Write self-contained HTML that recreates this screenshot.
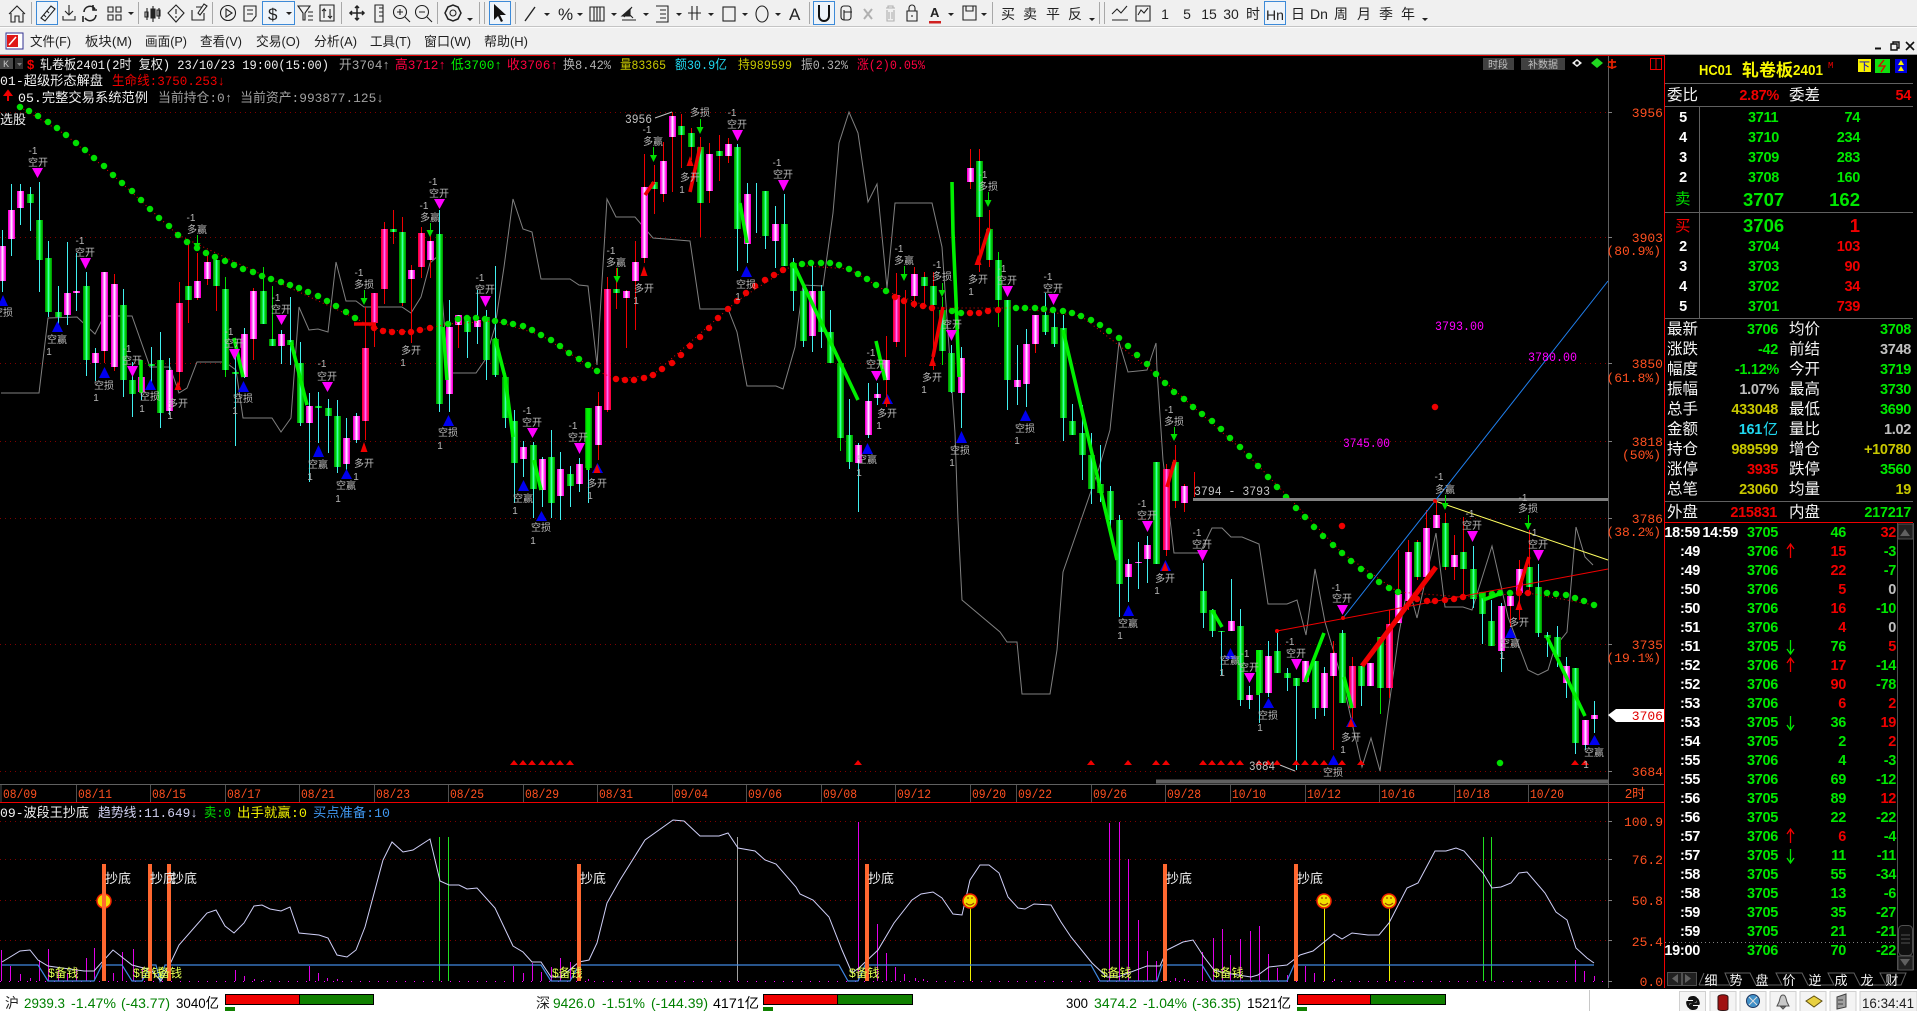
<!DOCTYPE html>
<html lang="zh"><head><meta charset="utf-8"><title>行情</title>
<style>
html,body{margin:0;padding:0;background:#000;overflow:hidden;width:1917px;height:1011px}
svg{display:block}
text{white-space:pre}
.m{font-family:"Liberation Mono","Noto Sans CJK SC",monospace;font-size:13px}
.s{font-family:"Liberation Sans","Noto Sans CJK SC",sans-serif}
.l{font-family:"Liberation Sans","Noto Sans CJK SC",sans-serif;font-size:10px;fill:#b8b8b8;text-anchor:middle}
.o{font-family:"Liberation Mono",monospace;font-size:13px;fill:#ff5020}
.n{font-family:"Liberation Sans",sans-serif;font-weight:bold;font-size:14.5px;letter-spacing:-.3px}
.b{font-family:"Liberation Sans",sans-serif;font-weight:bold;font-size:18.5px}
.c{font-family:"Liberation Sans","Noto Sans CJK SC",sans-serif;font-size:15.5px;fill:#f4f4f4}
.t{font-family:"Liberation Sans","Noto Sans CJK SC",sans-serif;font-size:13px;fill:#202020}
.st{font-family:"Liberation Sans","Noto Sans CJK SC",sans-serif;font-size:14px}
</style></head><body>
<svg xmlns="http://www.w3.org/2000/svg" width="1917" height="1011" viewBox="0 0 1917 1011">
<defs>
<path id="G" d="M30 194V203M39 220V260M48 258V312M58 312V317M86 286V360M123 305V380M132 380V394M151 364V366M160 360V413M188 286V300M216 260V286M225 289V370M235 372V374M263 291V324M272 339V346M290 340V345M300 363V423M318 406V408M328 408V416M337 416V467M393 229V232M402 232V303M439 234V404M467 317V332M486 317V360M495 339V375M505 377V418M514 421V463M533 445V489M551 457V503M570 474V486M588 408V468M616 289V293M654 182V189M681 126V135M691 133V147M700 147V203M719 151V156M737 147V229M765 191V236M784 224V266M793 263V291M803 291V341M821 291V332M830 332V363M840 363V438M849 435V462M924 277V286M933 286V305M942 310V351M951 353V392M979 161V217M989 229V260M998 260V300M1007 300V380M1045 315V332M1054 327V344M1063 328V418M1072 421V435M1082 433V455M1091 455V489M1100 484V493M1110 491V520M1119 520V584M1156 462V564M1175 462V501M1203 591V613M1212 610V631M1221 631V632M1240 626V700M1259 650V693M1277 651V673M1287 673V678M1296 678V686M1315 661V708M1342 633V703M1361 666V686M1380 637V688M1417 542V577M1445 523V567M1463 552V569M1473 569V599M1482 592V614M1491 621V646M1529 567V587M1538 587V633M1547 635V638M1557 637V657M1575 668V743"/>
<path id="P" d="M2 246V281M11 210V239M20 191V208M67 293V315M76 291V293M95 353V363M104 272V351M114 284V367M141 377V392M169 370V411M197 281V298M207 262V279M244 334V377M253 291V339M281 334V346M309 406V423M346 438V464M356 416V440M411 270V279M430 241V260M449 327V394M458 315V325M477 320V327M523 447V459M542 459V490M560 469V496M579 464V484M598 406V445M626 291V298M635 262V281M644 187V258M663 161V194M672 116V137M709 154V191M728 144V156M747 194V244M775 224V241M812 291V336M858 445V463M868 401V435M877 394V398M886 360V380M914 274V296M961 358V393M970 168V182M1017 380V387M1026 344V384M1035 315V344M1128 564V577M1138 562V563M1147 545V559M1184 486V503M1231 621V631M1249 695V700M1268 656V693M1305 661V682M1324 673V708M1333 653V676M1370 663V686M1398 594V623M1408 552V601M1426 528V577M1436 515V528M1454 555V567M1501 606V651M1510 596V606M1519 569V593M1566 666V683M1585 720V745M1594 715V719"/>
<path id="R" d="M179 303V372M365 348V421M374 293V323M384 229V289M421 233V267M607 289V410M896 295V342M1166 469V550M1352 666V708M1389 624V688"/>
</defs>
<rect width="1917" height="1011" fill="#000"/>
<!-- toolbar -->
<rect width="1917" height="26" fill="#f0f0f0"/>
<rect y="26" width="1917" height="1" fill="#c4c4c4"/>
<rect y="27" width="1917" height="1" fill="#fcfcfc"/>
<rect y="28" width="1917" height="26" fill="#f0f0f0"/>
<rect y="54" width="1917" height="1" fill="#a0a0a0"/>
<g fill="#eef4fa" stroke="#3c8ad8" stroke-width="1">
<rect x="36.5" y="1.5" width="21" height="23"/><rect x="262.5" y="1.5" width="32" height="23"/><rect x="489.5" y="1.5" width="21" height="23"/><rect x="813.5" y="1.5" width="21" height="23"/><rect x="1264.5" y="1.5" width="21" height="23"/>
</g>
<g stroke="#a8a8a8" stroke-width="1"><path d="M31.5 2V24M138.5 2V24M212.5 2V24M341.5 2V24M437.5 2V24M479.5 2V24M484.5 2V24M515.5 2V24M809.5 2V24M992.5 2V24M1099.5 2V24M1104.5 2V24"/></g>
<g fill="none" stroke="#222" stroke-width="1.1">
<path d="M9 14L17 6L25 14M11 13V22H15V16H19V22H23V13"/>
<path d="M41 18L51 6L55 9L45 21ZM44 15L46 17M47 11L49 13"/>
<path d="M69 5V15M65 11L69 15L73 11M63 16V20H75V16"/>
<path d="M84 12A6 6 0 0 1 95 9M96 15A6 6 0 0 1 85 18M93 5V10H97M83 22V16" stroke-width="1.6"/>
<path d="M108 7h5v5h-5zM116 7h5v5h-5zM108 15h5v5h-5zM116 15h5v5h-5z"/>
<path d="M147 8V20M153 6V22M159 8V19"/><path d="M151 9h4v9h-4z" fill="#222"/><path d="M145 12h3v5h-3zM157 10h3v6h-3z"/>
<path d="M176 5L184 13L176 22L168 13ZM176 9V14M176 16V18"/>
<path d="M196 7h6M192 10V20H204V13M200 15L207 6L204 4L198 13Z"/>
<circle cx="228" cy="13" r="7.5"/><path d="M226 9L232 13L226 17Z"/>
<path d="M244 6H256V16L252 21H244ZM247 10H253M247 14H253"/>
<path d="M298 6H310L305 13V20H303V13ZM308 12H313M308 16H313M308 20H313"/>
<path d="M320 5H334V21H320ZM324 18V9L322 11M324 9L326 11M330 9V18L328 16M330 18L332 16"/>
<path d="M357 6V20M350 13H364M355 8L357 6L359 8M355 18L357 20L359 18M352 11L350 13L352 15M362 11L364 13L362 15" stroke-width="1.5"/>
<path d="M375 5H383V22H375ZM379 8H383M379 12H383M379 16H383"/>
<circle cx="400" cy="12" r="6.5"/><path d="M405 17L410 22M397 12H403M400 9V15"/>
<circle cx="422" cy="12" r="6.5"/><path d="M427 17L432 22M419 12H425"/>
<circle cx="453" cy="13" r="3"/><path d="M448 7L453 5L458 7L461 13L458 19L453 21L448 19L445 13Z" stroke-width="1.5"/>
<path d="M525 21L535 7" stroke-width="1.4"/>
<path d="M590 7H604V21H590ZM594 7V21M597 7V21M600 7V21"/>
<path d="M622 20H636M624 17L632 7M627 12L633 18"/><path d="M622 16L630 9V16Z" fill="#222"/>
<path d="M656 6H668V22H656M660 10H666M660 14H666M660 18H666"/>
<path d="M688 13H701M692 6V20M697 6V20"/>
<rect x="723" y="7" width="12" height="14"/>
<ellipse cx="762" cy="14" rx="6" ry="8"/>
<rect x="841" y="6" width="10" height="14" rx="3"/><path d="M844 20V10M844 12H852"/>
<path d="M864 9L872 19M872 9L864 19" stroke="#b0b0b0" stroke-width="2"/>
<path d="M886 8H895M888 8V6H893V8M887 10V21H894V10M889 12V19M892 12V19" stroke="#b0b0b0"/>
<path d="M907 11H917V21H907ZM909 11V8A3 3 0 0 1 915 8V11M912 15V17"/>
<path d="M963 6H976V20H963ZM966 6V11H973V6"/>
<path d="M1112 20H1128M1112 14L1117 9L1121 13L1127 6"/>
<path d="M1136 6H1150V21H1136ZM1138 15L1141 10L1144 13L1148 8"/>
</g>
<path d="M494 4V20L498 16L501 22L503 21L500 15H506Z" fill="#111"/>
<g class="s" fill="#222" font-size="17"><text x="268" y="20" font-family="Liberation Sans">$</text><text x="558" y="20" font-family="Liberation Sans">%</text><text x="789" y="20" font-family="Liberation Sans">A</text>
<text x="930" y="17" font-family="Liberation Sans" font-size="13" font-weight="bold" fill="#222">A</text></g>
<rect x="929" y="21" width="12" height="2.5" fill="#d02020"/>
<path d="M818 5H820V16A4 4 0 0 0 828 16V5H830V16A6 6 0 0 1 818 16Z" fill="#111"/>
<g fill="#222">
<path d="M128 12h6l-3 3zM286 12h6l-3 3zM544 13h6l-3 3zM577 13h6l-3 3zM611 13h6l-3 3zM643 13h6l-3 3zM676 13h6l-3 3zM708 13h6l-3 3zM742 13h6l-3 3zM775 13h6l-3 3zM948 13h6l-3 3zM981 13h6l-3 3zM467 18h6l-3 3zM1089 18h6l-3 3zM1422 18h6l-3 3z"/>
</g>
<g class="s" font-size="14" fill="#222" text-anchor="middle">
<text x="1008" y="19">买</text><text x="1030" y="19">卖</text><text x="1053" y="19">平</text><text x="1075" y="19">反</text>
<text x="1165" y="19">1</text><text x="1187" y="19">5</text><text x="1209" y="19">15</text><text x="1231" y="19">30</text><text x="1253" y="19">时</text><text x="1275" y="20">Hn</text><text x="1298" y="19">日</text><text x="1319" y="19">Dn</text><text x="1341" y="19">周</text><text x="1364" y="19">月</text><text x="1386" y="19">季</text><text x="1408" y="19">年</text>
</g>
<!-- menu -->
<rect x="6" y="33" width="17" height="16" fill="#fff" stroke="#303090"/><rect x="7" y="35" width="11" height="12" fill="#e01818"/><path d="M9 45L16 37" stroke="#fff" stroke-width="1.5"/>
<g class="t">
<text x="30" y="46" textLength="41" lengthAdjust="spacingAndGlyphs">文件(F)</text>
<text x="85" y="46" textLength="47" lengthAdjust="spacingAndGlyphs">板块(M)</text>
<text x="145" y="46" textLength="42" lengthAdjust="spacingAndGlyphs">画面(P)</text>
<text x="200" y="46" textLength="42" lengthAdjust="spacingAndGlyphs">查看(V)</text>
<text x="256" y="46" textLength="44" lengthAdjust="spacingAndGlyphs">交易(O)</text>
<text x="314" y="46" textLength="43" lengthAdjust="spacingAndGlyphs">分析(A)</text>
<text x="370" y="46" textLength="41" lengthAdjust="spacingAndGlyphs">工具(T)</text>
<text x="424" y="46" textLength="47" lengthAdjust="spacingAndGlyphs">窗口(W)</text>
<text x="484" y="46" textLength="44" lengthAdjust="spacingAndGlyphs">帮助(H)</text>
</g>
<path d="M1875 47.5h6v2h-6z" fill="#111"/>
<path d="M1893 44V42H1899V48H1897M1891 44H1897V50H1891Z" fill="none" stroke="#111" stroke-width="1.4"/>
<path d="M1906 42L1914 50M1914 42L1906 50" stroke="#111" stroke-width="1.6"/>
<!-- chart frame -->
<rect y="55" width="1664" height="1" fill="#e00000"/>
<g fill="none" stroke="#800000" stroke-width="1" stroke-dasharray="1 4">
<path d="M0 112.5H1608M0 237.5H1608M0 363.5H1608M0 441.5H1608M0 518.5H1608M0 644.5H1608M0 771.5H1608M0 821.5H1608M0 859.5H1608M0 900.5H1608M0 940.5H1608"/>
</g>
<path d="M1608.5 56V988" stroke="#606060"/>
<path d="M1608 112.5h4M1608 237.5h4M1608 363.5h4M1608 441.5h4M1608 518.5h4M1608 644.5h4M1608 771.5h4M1608 821.5h4M1608 859.5h4M1608 900.5h4M1608 940.5h4M1608 981.5h4" stroke="#808080"/>
<path d="M1664.5 55V988" stroke="#f00000"/>
<!-- gray line -->
<polyline fill="none" stroke="#808080" points="1,393 39,393 48,318 77,317 95,334 104,316 132,316 150,367 170,367 179,393 187,388 197,362 225,362 236,370 243,418 272,418 281,432 291,418 299,307 309,330 318,329 328,332 336,262 346,301 356,301 364,307 402,307 411,313 421,297 430,263 439,255 448,373 476,373 485,360 495,327 504,267 513,199 523,229 532,232 541,279 570,279 579,285 588,286 597,365 602,282 607,199 616,217 635,217 653,238 690,241 700,309 728,309 737,332 747,386 776,386 783,389 795,347 803,285 823,286 833,213 839,143 849,112 858,133 868,202 877,184 887,288 895,203 932,203 942,247 955,433 958,520 962,600 1000,632 1007,642 1017,642 1022,694 1050,694 1057,650 1063,572 1080,523 1099,468 1110,430 1119,342 1128,372 1147,370 1156,343 1157,370 1163,460 1174,553 1200,553 1212,528 1222,528 1231,537 1242,537 1259,544 1268,604 1287,604 1297,600 1306,635 1315,569 1325,622 1343,683 1362,767 1371,738 1380,771 1399,633 1408,585 1417,618 1436,533 1445,607 1463,607 1472,610 1492,546 1508,617 1528,670 1538,675 1548,670 1555,647 1567,632 1576,527 1585,557 1593,565"/>
<!-- candles -->
<g transform="translate(.5 0)" fill="none">
<path stroke="#40f0f0" d="M2 230V292M11 184V256M20 184V225M30 187V231M39 182V292M48 241V317M58 286V327M67 242V325M76 253V311M86 272V376M95 348V381M123 289V397M132 362V417M141 360V400M151 347V390M160 332V428M169 358V415M235 340V446M244 328V378M281 330V364M290 297V365M300 342V426M309 393V482M318 392V443M328 399V453M337 400V473M346 418V470M356 413V443M439 210V412M449 300V412M467 317V358M477 290V344M486 310V380M495 266V377M505 373V428M514 410V503M523 441V477M533 442V518M542 457V507M551 430V518M560 452V520M570 466V507M579 458V492M588 408V503M737 144V271M747 183V263M756 183V233M765 191V249M775 206V268M784 194V266M793 258V311M803 285V347M812 265V352M821 285V348M830 310V363M849 399V469M858 443V512M868 383V438M877 383V405M951 345V393M961 347V428M1007 300V410M1017 345V405M1026 329V407M1045 293V335M1054 312V347M1063 315V441M1072 404V435M1082 405V480M1091 433V504M1100 445V502M1110 486V527M1119 515V617M1128 559V602M1138 542V589M1147 536V583M1156 522V564M1203 563V628M1212 609V637M1221 632V675M1231 579V631M1240 609V706M1249 686V709M1259 650V723M1268 641V697M1277 630V673M1287 668V691M1296 678V770M1305 661V682M1315 661V719M1324 667V716M1342 630V703M1361 686V706M1473 546V608M1482 614V644M1491 600V646M1501 603V672M1538 564V637M1547 632V657M1557 626V667M1566 657V698M1575 668V754M1585 745V750M1594 701V733"/>
<path stroke="#f00000" d="M104 272V363M114 274V371M179 282V385M188 240V323M197 253V300M207 252V285M216 258V311M253 288V360M365 307V440M374 293V347M384 222V304M393 210V244M402 217V306M411 265V343M421 227V278M430 223V278M458 315V348M598 392V460M607 277V412M616 268V309M626 290V348M635 241V330M644 154V263M654 165V214M663 142V202M672 112V192M681 114V168M691 128V160M700 137V237M709 143V203M719 135V181M728 138V163M886 336V407M896 273V347M905 290V357M914 267V308M924 272V307M933 272V370M970 149V189M979 149V272M989 210V267M1035 315V353M1166 464V556M1175 445V508M1184 484V512M1194 472V497M1333 641V750M1352 657V720M1370 663V686M1389 610V698M1398 550V623M1408 540V610M1417 540V580M1426 510V577M1436 502V528M1445 513V570M1454 535V580M1463 517V595M1510 606V627M1519 560V620M1529 530V590"/>
<path stroke="#00e000" d="M225 277V377M263 267V324M272 286V346M840 362V451M942 297V365M998 252V327M1380 688V714"/>
<use href="#G" stroke="#00a000" stroke-width="7"/><use href="#G" stroke="#00e818" stroke-width="4"/><use href="#G" stroke="#40ffb0" stroke-width="1.5"/>
<use href="#P" stroke="#ff00d8" stroke-width="7"/><use href="#P" stroke="#ff70ff" stroke-width="4"/><use href="#P" stroke="#ffe0ff" stroke-width="1.5"/>
<use href="#R" stroke="#ff0040" stroke-width="7"/><use href="#R" stroke="#ff10a0" stroke-width="4"/><use href="#R" stroke="#ff70f0" stroke-width="1.5"/>
</g>
<!-- dots -->
<polyline fill="none" stroke="#f00000" stroke-dasharray="1 3" points="20,107 66,135 113,175 178,235 271,279 355,318 374,328 411,332 448,324 495,321 541,335 597,371 616,379 653,375 737,301 793,265 849,269 886,291 932,308 1016,308 1081,316 1156,374 1249,456 1342,553 1398,592 1463,597 1528,593 1594,605"/>
<path fill="none" stroke-linecap="round" stroke-width="6.5" stroke="#00e000" d="M20 107h0M29 111h0M38 116h0M48 122h0M57 128h0M66 135h0M76 143h0M85 150h0M94 158h0M104 166h0M113 175h0M122 183h0M132 191h0M141 200h0M150 209h0M159 218h0M169 226h0M178 235h0M187 242h0M197 248h0M206 253h0M215 257h0M225 261h0M234 265h0M243 269h0M253 272h0M262 276h0M271 279h0M281 282h0M290 285h0M299 288h0M308 292h0M318 296h0M327 301h0M336 306h0M346 312h0M355 318h0M448 324h0M458 319h0M467 318h0M476 318h0M485 319h0M495 321h0M504 322h0M513 324h0M523 326h0M532 330h0M541 335h0M551 340h0M560 346h0M569 353h0M579 359h0M588 365h0M597 371h0M793 265h0M802 264h0M811 263h0M821 263h0M830 263h0M839 265h0M849 269h0M858 274h0M867 279h0M876 285h0M886 291h0M952 311h0M961 313h0M1016 308h0M1025 308h0M1035 308h0M1044 309h0M1053 310h0M1063 311h0M1072 313h0M1081 316h0M1091 320h0M1100 325h0M1109 331h0M1119 338h0M1128 346h0M1137 355h0M1147 364h0M1156 374h0M1165 383h0M1174 392h0M1184 399h0M1193 407h0M1202 414h0M1212 421h0M1221 429h0M1230 438h0M1240 447h0M1249 456h0M1258 466h0M1268 477h0M1277 487h0M1286 497h0M1296 508h0M1305 517h0M1314 527h0M1323 536h0M1333 545h0M1342 553h0M1351 561h0M1361 569h0M1370 576h0M1379 582h0M1389 588h0M1398 592h0M1482 595h0M1492 594h0M1500 593h0M1510 593h0M1547 593h0M1556 594h0M1566 595h0M1575 598h0M1584 601h0M1594 605h0M1500 763h0"/>
<path fill="none" stroke-linecap="round" stroke-width="6.5" stroke="#f00000" d="M374 328h0M383 331h0M392 332h0M402 332h0M411 332h0M420 330h0M430 328h0M616 379h0M625 380h0M634 380h0M644 378h0M653 375h0M662 369h0M672 363h0M681 355h0M690 346h0M700 337h0M709 328h0M718 318h0M728 309h0M737 301h0M746 293h0M755 286h0M765 280h0M774 275h0M783 270h0M895 297h0M904 301h0M914 304h0M923 306h0M932 308h0M970 313h0M979 313h0M988 311h0M998 310h0M1342 526h0M1435 407h0M1417 599h0M1427 601h0M1435 601h0M1445 600h0M1454 599h0M1463 597h0M1519 593h0M1528 593h0"/>
<!-- thin trend lines -->
<path d="M1193 499.5H1608" stroke="#808080" stroke-width="3"/>
<path d="M1156 781.5H1608" stroke="#606060" stroke-width="4"/>
<path d="M1277 631L1608 569" stroke="#f00000" fill="none"/>
<path d="M1343 618L1608 281" stroke="#2080f0" fill="none"/>
<path d="M1435 501L1608 560" stroke="#ffff60" fill="none"/>
<path d="M1280 765L1295 771M655 118L672 112" stroke="#c0c0c0" fill="none"/>
<path d="M1277 631h0M1343 618h0M1435 501h0" stroke="#f00000" stroke-width="4" stroke-linecap="round"/>
<!-- thick trend -->
<g fill="none" stroke="#00f000" stroke-width="3.6">
<path d="M141 360V393M234 338L243 377M291 342L307 405M443 327L447 380M495 338L505 377L513 437M534 460L541 490M588 408V470M793 263L858 400M740 203L747 243M876 341L885 380M952 182L953 233L956 300L959 377M1063 330L1117 560M1212 610L1222 627M1305 682L1324 633M1344 677L1352 708M1483 600L1502 593M1547 637L1585 716M1258 650V695"/>
</g>
<g fill="none" stroke="#f00000" stroke-width="3.6">
<path d="M354 324H376M645 195L654 182M690 192L700 147M933 357L943 307M978 263L989 228M1167 487L1175 460M1518 592L1529 557"/>
<path d="M1362 666L1436 567" stroke-width="5"/>
</g>
<!-- markers -->
<path fill="#ff00ff" d="M32 168h11l-5.500 10zM80 258h11l-5.500 11zM127 366h11l-5.500 11zM229 349h11l-5.500 11zM276 315h11l-5.500 10zM322 382h11l-5.500 10zM434 199h11l-5.500 10zM480 296h11l-5.500 11zM527 428h11l-5.500 10zM574 443h11l-5.500 11zM732 130h11l-5.500 11zM778 180h11l-5.500 11zM871 371h11l-5.500 10zM946 330h11l-5.500 11zM1002 286h11l-5.500 11zM1048 294h11l-5.500 11zM1142 521h11l-5.500 11zM1197 550h11l-5.500 11zM1244 673h11l-5.500 10zM1291 659h11l-5.500 11zM1337 605h11l-5.500 10zM1467 531h11l-5.500 11zM1533 550h11l-5.500 11z"/>
<path fill="#0000f0" d="M-2 306h10l-5-11zM52 332h11l-5.500 -11zM99 378h11l-5.500 -11zM145 390h11l-5.500 -11zM238 392h11l-5.500 -11zM313 457h11l-5.500 -12zM341 479h11l-5.500 -10zM443 426h11l-5.500 -11zM518 491h11l-5.500 -11zM536 521h11l-5.500 -10zM592 473h11l-5.500 -10zM741 277h11l-5.500 -11zM862 454h11l-5.500 -11zM882 404h11l-5.500 -10zM956 443h11l-5.500 -12zM1020 421h11l-5.500 -11zM1123 616h11l-5.500 -11zM1160 571h11l-5.500 -11zM1225 659h11l-5.500 -11zM1263 708h11l-5.500 -10zM1328 765h11l-5.500 -10zM1346 727h11l-5.500 -10zM1505 638h11l-5.500 -11zM1589 745h11l-5.500 -10z"/>
<path fill="#f00000" d="M174.500 390h7l-3.500 -9zM593.500 473h7l-3.500 -9zM640.500 276h7l-3.500 -10zM686.500 166h7l-3.500 -10zM360.500 452h7l-3.500 -10zM883.500 404h7l-3.500 -9zM929 366h7l-3.500 -10zM974.500 265h7l-3.500 -10zM1161.500 571h7l-3.500 -9zM1347.500 727h7l-3.500 -9zM1515.500 610h7l-3.500 -10z"/>
<path fill="#00e000" d="M193.500 243h7l-3.500 7zM613.500 276h7l-3.500 7zM650 155h7l-3.500 7zM696.500 127h7l-3.500 7zM360.500 298h7l-3.500 7zM426.500 230h7l-3.500 7zM900.500 274h7l-3.500 7zM938.500 290h7l-3.500 7zM984.500 200h7l-3.500 7zM1170.500 434h7l-3.500 7zM1441.500 503h7l-3.500 7zM1524.500 523h7l-3.500 7z"/>
<path stroke="#00e000" fill="none" d="M197.500 235V245M617.500 268V278M653.500 147V157M700.500 119V129M364.500 290V300M430.500 223V232M904.500 266V276M942.500 283V292M988.500 192V202M1174.500 427V436M1445.500 495V505M1528.500 515V525"/>
<path fill="#f00000" d="M510 765l4-5 4 5zM519 765l4-5 4 5zM528 765l4-5 4 5zM538 765l4-5 4 5zM547 765l4-5 4 5zM556 765l4-5 4 5zM566 765l4-5 4 5zM854 765l4-5 4 5zM1087 765l4-5 4 5zM1124 765l4-5 4 5zM1152 765l4-5 4 5zM1162 765l4-5 4 5zM1199 765l4-5 4 5zM1208 765l4-5 4 5zM1217 765l4-5 4 5zM1227 765l4-5 4 5zM1236 765l4-5 4 5zM1255 765l4-5 4 5zM1264 765l4-5 4 5zM1273 765l4-5 4 5zM1292 765l4-5 4 5zM1301 765l4-5 4 5zM1311 765l4-5 4 5zM1320 765l4-5 4 5zM1338 765l4-5 4 5zM1357 765l4-5 4 5zM1571 765l4-5 4 5zM1581 765l4-5 4 5z"/>
<g class="l">
<text x="33" y="154">-1</text><text x="38" y="166">空开</text><text x="80" y="244">-1</text><text x="85" y="256">空开</text><text x="3" y="316">空损</text><text x="57" y="343">空赢</text><text x="49" y="355">1</text><text x="104" y="389">空损</text><text x="96" y="401">1</text><text x="127" y="352">-1</text><text x="132" y="364">空开</text><text x="150" y="400">空损</text><text x="142" y="412">1</text><text x="178" y="407">多开</text><text x="170" y="419">1</text><text x="191" y="221">-1</text><text x="197" y="233">多赢</text><text x="243" y="402">空损</text><text x="235" y="414">1</text><text x="229" y="335">-1</text><text x="234" y="347">空开</text><text x="276" y="301">-1</text><text x="281" y="313">空开</text><text x="359" y="276">-1</text><text x="364" y="288">多损</text><text x="433" y="185">-1</text><text x="439" y="197">空开</text><text x="424" y="209">-1</text><text x="430" y="221">多赢</text><text x="411" y="354">多开</text><text x="403" y="366">1</text><text x="448" y="436">空损</text><text x="440" y="449">1</text><text x="480" y="281">-1</text><text x="485" y="293">空开</text><text x="322" y="367">-1</text><text x="327" y="380">空开</text><text x="318" y="468">空赢</text><text x="310" y="480">1</text><text x="346" y="489">空赢</text><text x="338" y="502">1</text><text x="364" y="467">多开</text><text x="356" y="480">1</text><text x="527" y="414">-1</text><text x="532" y="426">空开</text><text x="523" y="502">空赢</text><text x="515" y="514">1</text><text x="541" y="531">空损</text><text x="533" y="544">1</text><text x="573" y="429">-1</text><text x="578" y="441">空开</text><text x="597" y="487">多开</text><text x="590" y="499">1</text><text x="611" y="254">-1</text><text x="616" y="266">多赢</text><text x="644" y="292">多开</text><text x="636" y="304">1</text><text x="647" y="133">-1</text><text x="653" y="145">多赢</text><text x="690" y="181">多开</text><text x="682" y="193">1</text><text x="700" y="116">多损</text><text x="732" y="116">-1</text><text x="737" y="128">空开</text><text x="746" y="288">空损</text><text x="738" y="300">1</text><text x="777" y="166">-1</text><text x="783" y="178">空开</text><text x="871" y="356">-1</text><text x="876" y="368">空开</text><text x="867" y="463">空赢</text><text x="859" y="476">1</text><text x="887" y="417">多开</text><text x="879" y="429">1</text><text x="899" y="252">-1</text><text x="904" y="264">多赢</text><text x="937" y="268">-1</text><text x="942" y="280">多损</text><text x="932" y="381">多开</text><text x="924" y="393">1</text><text x="952" y="328">空开</text><text x="960" y="454">空损</text><text x="952" y="466">1</text><text x="983" y="178">-1</text><text x="988" y="190">多损</text><text x="978" y="283">多开</text><text x="971" y="295">1</text><text x="1002" y="272">-1</text><text x="1007" y="284">空开</text><text x="1048" y="280">-1</text><text x="1053" y="292">空开</text><text x="1025" y="432">空损</text><text x="1017" y="444">1</text><text x="1128" y="627">空赢</text><text x="1120" y="639">1</text><text x="1142" y="507">-1</text><text x="1147" y="519">空开</text><text x="1169" y="413">-1</text><text x="1174" y="425">多损</text><text x="1165" y="582">多开</text><text x="1157" y="594">1</text><text x="1197" y="536">-1</text><text x="1202" y="548">空开</text><text x="1230" y="664">空赢</text><text x="1222" y="676">1</text><text x="1245" y="657">-1</text><text x="1249" y="671">空开</text><text x="1268" y="719">空损</text><text x="1260" y="731">1</text><text x="1290" y="645">-1</text><text x="1296" y="657">空开</text><text x="1336" y="591">-1</text><text x="1342" y="602">空开</text><text x="1333" y="776">空损</text><text x="1351" y="741">多开</text><text x="1343" y="753">1</text><text x="1439" y="480">-1</text><text x="1445" y="493">多赢</text><text x="1470" y="517">-1</text><text x="1472" y="529">空开</text><text x="1523" y="501">-1</text><text x="1528" y="512">多损</text><text x="1533" y="536">-1</text><text x="1538" y="548">空开</text><text x="1510" y="647">空赢</text><text x="1502" y="659">1</text><text x="1519" y="626">多开</text><text x="1594" y="756">空赢</text><text x="1586" y="768">1</text>
</g>
<g class="m" font-size="12">
<text x="625" y="123" fill="#c0c0c0" textLength="27" lengthAdjust="spacingAndGlyphs">3956</text>
<text x="1249" y="770" fill="#c0c0c0" textLength="26" lengthAdjust="spacingAndGlyphs">3684</text>
<text x="1194" y="495" fill="#c0c0c0" textLength="76" lengthAdjust="spacingAndGlyphs">3794 - 3793</text>
<text x="1343" y="447" fill="#ff00ff" textLength="47" lengthAdjust="spacingAndGlyphs">3745.00</text>
<text x="1435" y="330" fill="#ff00ff" textLength="49" lengthAdjust="spacingAndGlyphs">3793.00</text>
<text x="1528" y="361" fill="#ff00ff" textLength="49" lengthAdjust="spacingAndGlyphs">3780.00</text>
</g>
<!-- header text -->
<rect x="0" y="58" width="13" height="11" fill="#484848"/><rect x="15" y="58" width="8" height="11" fill="#303030"/>
<text x="3" y="67" font-family="Liberation Mono" font-size="10" fill="#c0c0c0">K</text><path d="M17 63h5l-2.500 3z" fill="#808080"/>
<g class="m">
<text x="27" y="69" fill="#f00000" font-weight="bold" font-family="Liberation Sans">$</text>
<text x="40" y="69" fill="#f0f0f0" textLength="289" lengthAdjust="spacingAndGlyphs">轧卷板2401(2时 复权) 23/10/23 19:00(15:00)</text>
<text x="339" y="69" fill="#a8a8a8" textLength="51" lengthAdjust="spacingAndGlyphs">开3704↑</text>
<text x="395" y="69" fill="#ff0040" textLength="51" lengthAdjust="spacingAndGlyphs">高3712↑</text>
<text x="451" y="69" fill="#00f000" textLength="51" lengthAdjust="spacingAndGlyphs">低3700↑</text>
<text x="507" y="69" fill="#ff0040" textLength="51" lengthAdjust="spacingAndGlyphs">收3706↑</text>
<text x="563" y="69" fill="#b0b0b0" textLength="48" lengthAdjust="spacingAndGlyphs">换8.42%</text>
<text x="620" y="69" fill="#c8c800" textLength="46" lengthAdjust="spacingAndGlyphs">量83365</text>
<text x="675" y="69" fill="#20d8f0" textLength="52" lengthAdjust="spacingAndGlyphs">额30.9亿</text>
<text x="738" y="69" fill="#c8c800" textLength="54" lengthAdjust="spacingAndGlyphs">持989599</text>
<text x="801" y="69" fill="#b0b0b0" textLength="47" lengthAdjust="spacingAndGlyphs">振0.32%</text>
<text x="857" y="69" fill="#ff0040" textLength="68" lengthAdjust="spacingAndGlyphs">涨(2)0.05%</text>
<text x="0" y="85" fill="#f0f0f0" textLength="103" lengthAdjust="spacingAndGlyphs">01-超级形态解盘</text>
<text x="112" y="85" fill="#f00000" textLength="113" lengthAdjust="spacingAndGlyphs">生命线:3750.253↓</text>
<text x="18" y="102" fill="#f0f0f0" textLength="130" lengthAdjust="spacingAndGlyphs">05.完整交易系统范例</text>
<text x="158" y="102" fill="#a0a0a0" textLength="226" lengthAdjust="spacingAndGlyphs">当前持仓:0↑ 当前资产:993877.125↓</text>
<text x="0" y="124" fill="#f0f0f0" font-size="13">选股</text>
<text x="0" y="817" fill="#f0f0f0" textLength="89" lengthAdjust="spacingAndGlyphs">09-波段王抄底</text>
<text x="98" y="817" fill="#d0d0f0" textLength="100" lengthAdjust="spacingAndGlyphs">趋势线:11.649↓</text>
<text x="204" y="817" fill="#00e000" textLength="27" lengthAdjust="spacingAndGlyphs">卖:0</text>
<text x="237" y="817" fill="#f0f000" textLength="70" lengthAdjust="spacingAndGlyphs">出手就赢:0</text>
<text x="313" y="817" fill="#4098f0" textLength="77" lengthAdjust="spacingAndGlyphs">买点准备:10</text>
</g>
<path d="M8 101V92M5 95L8 91L11 95Z" stroke="#f00000" stroke-width="2" fill="#f00000"/>
<rect x="1483" y="58" width="31" height="12" fill="#404040"/><rect x="1521" y="58" width="44" height="12" fill="#404040"/>
<g class="s" font-size="10" fill="#c0c0c0" text-anchor="middle"><text x="1498" y="68">时段</text><text x="1543" y="68">补数据</text></g>
<path d="M1577 59l5 4-5 4-5-4z" fill="#f0f0f0"/><circle cx="1577" cy="63" r="1.800" fill="#000"/>
<path d="M1597 58l6 5-6 5-6-5z" fill="#20d820"/>
<path d="M1612 59V69M1608 62H1616M1608 66C1609 68 1615 68 1616 66" stroke="#e02000" stroke-width="1.800" fill="none"/>
<rect x="1650.500" y="58.500" width="11" height="11" fill="none" stroke="#f00000"/><path d="M1656 58V70" stroke="#f00000"/>
<!-- price axis -->
<g class="o" text-anchor="end">
<text x="1663" y="117">3956</text><text x="1663" y="242">3903</text><text x="1661" y="255">(80.9%)</text><text x="1663" y="368">3850</text><text x="1661" y="382">(61.8%)</text><text x="1663" y="446">3818</text><text x="1661" y="459">(50%)</text><text x="1663" y="523">3786</text><text x="1661" y="536">(38.2%)</text><text x="1663" y="649">3735</text><text x="1661" y="662">(19.1%)</text><text x="1663" y="776">3684</text>
<text x="1663" y="826">100.9</text><text x="1663" y="864">76.2</text><text x="1663" y="905">50.8</text><text x="1663" y="946">25.4</text><text x="1663" y="986">0.0</text>
</g>
<polygon points="1608,715 1616,709 1664,709 1664,722 1616,722" fill="#fff"/>
<text x="1663" y="720" class="o" style="fill:#e00000" text-anchor="end">3706</text>
<!-- date axis -->
<path d="M0 784.500H1664" stroke="#606060"/>
<path d="M1 785V802M76.500 785V802M150.500 785V802M225.500 785V802M299.500 785V802M374.500 785V802M448.500 785V802M523.500 785V802M597.500 785V802M672.500 785V802M746.500 785V802M821.500 785V802M895.500 785V802M970.500 785V802M1016.500 785V802M1091.500 785V802M1165.500 785V802M1230.500 785V802M1305.500 785V802M1379.500 785V802M1454.500 785V802M1528.500 785V802M1608.500 785V802" stroke="#505050"/>
<path d="M0 802.500H1664" stroke="#f00000"/>
<g class="o">
<text x="3" y="798" textLength="34" lengthAdjust="spacingAndGlyphs">08/09</text><text x="78" y="798" textLength="34" lengthAdjust="spacingAndGlyphs">08/11</text><text x="152" y="798" textLength="34" lengthAdjust="spacingAndGlyphs">08/15</text><text x="227" y="798" textLength="34" lengthAdjust="spacingAndGlyphs">08/17</text><text x="301" y="798" textLength="34" lengthAdjust="spacingAndGlyphs">08/21</text><text x="376" y="798" textLength="34" lengthAdjust="spacingAndGlyphs">08/23</text><text x="450" y="798" textLength="34" lengthAdjust="spacingAndGlyphs">08/25</text><text x="525" y="798" textLength="34" lengthAdjust="spacingAndGlyphs">08/29</text><text x="599" y="798" textLength="34" lengthAdjust="spacingAndGlyphs">08/31</text><text x="674" y="798" textLength="34" lengthAdjust="spacingAndGlyphs">09/04</text><text x="748" y="798" textLength="34" lengthAdjust="spacingAndGlyphs">09/06</text><text x="823" y="798" textLength="34" lengthAdjust="spacingAndGlyphs">09/08</text><text x="897" y="798" textLength="34" lengthAdjust="spacingAndGlyphs">09/12</text><text x="972" y="798" textLength="34" lengthAdjust="spacingAndGlyphs">09/20</text><text x="1018" y="798" textLength="34" lengthAdjust="spacingAndGlyphs">09/22</text><text x="1093" y="798" textLength="34" lengthAdjust="spacingAndGlyphs">09/26</text><text x="1167" y="798" textLength="34" lengthAdjust="spacingAndGlyphs">09/28</text><text x="1232" y="798" textLength="34" lengthAdjust="spacingAndGlyphs">10/10</text><text x="1307" y="798" textLength="34" lengthAdjust="spacingAndGlyphs">10/12</text><text x="1381" y="798" textLength="34" lengthAdjust="spacingAndGlyphs">10/16</text><text x="1456" y="798" textLength="34" lengthAdjust="spacingAndGlyphs">10/18</text><text x="1530" y="798" textLength="34" lengthAdjust="spacingAndGlyphs">10/20</text>
<text x="1625" y="798" font-family="Liberation Sans,Noto Sans CJK SC" textLength="20" lengthAdjust="spacingAndGlyphs">2时</text>
</g>
<!-- indicator -->
<path d="M0 981.500H1608" stroke="#ff00ff" stroke-dasharray="1 8"/>
<path stroke="#e000e8" fill="none" d="M1.500 981V950M10.500 981V966M20.500 981V974M30.500 981V978M39.500 981V960M48.500 981V949M58.500 981V970M67.500 981V973M76.500 981V968M86.500 981V958M94.500 981V948M113.500 981V973M122.500 981V952M133.500 981V949M142.500 981V967M235.500 981V970M244.500 981V976M254.500 981V979M263.500 981V980M309.500 981V966M318.500 981V973M327.500 981V978M337.500 981V979M513.500 981V966M523.500 981V973M532.500 981V963M541.500 981V972M551.500 981V967M560.500 981V958M570.500 981V962M588.500 981V979M858.500 981V822M877.500 981V924M886.500 981V953M895.500 981V967M904.500 981V974M915.500 981V978M923.500 981V979M1109.500 981V823M1119.500 981V822M1128.500 981V859M1138.500 981V920M1147.500 981V951M1156.500 981V961M1175.500 981V978M1184.500 981V979M1202.500 981V952M1213.500 981V938M1222.500 981V929M1230.500 981V955M1240.500 981V939M1250.500 981V931M1259.500 981V926M1268.500 981V954M1277.500 981V968M1287.500 981V975M1305.500 981V966M1314.500 981V973M1324.500 981V978M1334.500 981V979M1575.500 981V960M1584.500 981V971M1594.500 981V976"/>
<path stroke="#20e020" fill="none" d="M439.500 837V981M448.500 837V981M1483.500 837V981M1491.500 837V981"/>
<path stroke="#a0a0a0" fill="none" d="M737.500 837V981"/>
<path stroke="#f0f000" fill="none" d="M970.500 908V981M1324.500 908V981M1389.500 908V981"/>
<polyline fill="none" stroke="#4088e0" stroke-width="1.200" points="2,965 38,965 48,981 94,981 102,965 122,965 132,981 142,981 151,965 156,965 160,981 165,965 541,965 551,981 570,981 579,965 839,965 848,981 858,981 865,965 1091,965 1100,981 1157,981 1162,965 1202,965 1212,981 1287,981 1294,965 1594,965"/>
<polyline fill="none" stroke="#d0d0f8" points="2,962 20,951 30,950 38,960 48,966 84,971 94,971 113,950 132,965 151,970 161,981 171,962 179,945 207,913 216,910 225,926 234,933 244,923 254,906 262,905 270,909 281,911 290,907 299,933 319,935 328,938 337,955 347,957 356,950 365,927 383,860 392,842 403,852 413,850 430,839 440,881 449,885 459,885 467,889 477,888 495,908 513,946 523,952 532,962 541,962 551,977 561,977 579,962 589,960 597,943 607,903 620,880 645,840 673,820 684,821 700,836 719,836 728,833 738,848 755,851 765,860 776,864 796,887 800,894 813,900 829,917 842,950 852,973 860,967 878,950 894,923 912,900 921,894 933,892 942,898 953,914 962,915 970,880 980,865 989,865 999,873 1008,897 1018,908 1025,909 1034,904 1051,905 1061,922 1071,937 1092,963 1107,977 1118,977 1131,972 1147,966 1160,966 1167,950 1183,942 1193,940 1204,957 1214,970 1225,973 1251,977 1258,975 1269,967 1287,965 1300,955 1313,951 1334,934 1342,939 1352,933 1368,935 1379,935 1389,923 1407,888 1418,883 1435,851 1446,851 1456,848 1464,851 1483,873 1492,888 1501,887 1511,883 1519,873 1527,872 1545,893 1556,912 1567,920 1576,948 1587,958 1594,963"/>
<g fill="#f0e000" stroke="#f02000" stroke-width="1.500"><circle cx="104" cy="901" r="7"/><circle cx="970" cy="901" r="7"/><circle cx="1324" cy="901" r="7"/><circle cx="1389" cy="901" r="7"/></g>
<g fill="none" stroke="#a04000" stroke-width="1.200"><path d="M966 903Q970 907 974 903M1320 903Q1324 907 1328 903M1385 903Q1389 907 1393 903M968 897v2M972 897v2M1322 897v2M1326 897v2M1387 897v2M1391 897v2"/></g>
<path fill="#ff6830" d="M102 864h4v117h-4zM148 864h4v117h-4zM167 864h4v117h-4zM577 864h4v117h-4zM865 864h4v117h-4zM1163 864h4v117h-4zM1294 864h4v117h-4z"/>
<g class="s" font-size="13" fill="#f0f0f0">
<text x="105" y="883">抄底</text><text x="150" y="883">抄底</text><text x="171" y="883">抄底</text><text x="580" y="883">抄底</text><text x="868" y="883">抄底</text><text x="1166" y="883">抄底</text><text x="1297" y="883">抄底</text>
</g>
<g class="s" font-size="12" fill="#e0ff50">
<text x="48" y="977">$备钱</text><text x="133" y="977">$备钱</text><text x="158" y="977">备钱</text><text x="552" y="977">$备钱</text><text x="849" y="977">$备钱</text><text x="1101" y="977">$备钱</text><text x="1213" y="977">$备钱</text>
</g>
<!-- right panel -->
<path d="M1665 83.500H1913M1665 106.500H1913M1665 212.500H1913M1665 318.500H1913M1665 501.500H1913M1699.500 107V318" stroke="#606060"/>
<path d="M1665 522.500H1913" stroke="#f00000"/>
<g class="s" font-weight="bold" fill="#f8f800">
<text x="1699" y="75" font-size="14.500" font-family="Liberation Sans" textLength="33" lengthAdjust="spacingAndGlyphs">HC01</text>
<text x="1742" y="76" font-size="17">轧卷板</text>
<text x="1793" y="75" font-size="14.500" font-family="Liberation Sans" textLength="30" lengthAdjust="spacingAndGlyphs">2401</text>
</g>
<text x="1828" y="68" font-family="Liberation Mono" font-size="9" fill="#f00000">M</text>
<rect x="1858" y="59" width="13" height="13" fill="#f8f000"/><text x="1864.500" y="70" font-family="Noto Sans CJK SC" font-size="11" fill="#0000d0" text-anchor="middle">下</text>
<rect x="1875" y="59" width="15" height="14" fill="#10e010"/><path d="M1884 60L1879 66H1885L1881 72" stroke="#e00000" stroke-width="1.300" fill="none"/>
<rect x="1895" y="59" width="12" height="14" fill="#0000e0"/><path d="M1901 60l3 5h-6zM1901 66l3 5h-6z" fill="#f8f000"/>
<g class="c">
<text x="1667" y="100">委比</text><text x="1789" y="100">委差</text>
<text x="1667" y="334">最新</text><text x="1789" y="334">均价</text>
<text x="1667" y="354">涨跌</text><text x="1789" y="354">前结</text>
<text x="1667" y="374">幅度</text><text x="1789" y="374">今开</text>
<text x="1667" y="394">振幅</text><text x="1789" y="394">最高</text>
<text x="1667" y="414">总手</text><text x="1789" y="414">最低</text>
<text x="1667" y="434">金额</text><text x="1789" y="434">量比</text>
<text x="1667" y="454">持仓</text><text x="1789" y="454">增仓</text>
<text x="1667" y="474">涨停</text><text x="1789" y="474">跌停</text>
<text x="1667" y="494">总笔</text><text x="1789" y="494">均量</text>
<text x="1667" y="517">外盘</text><text x="1789" y="517">内盘</text>
<text x="1675" y="204" style="fill:#00e000">卖</text>
<text x="1675" y="231" style="fill:#f00000">买</text>
</g>
<g class="n" fill="#fff" text-anchor="middle">
<text x="1683" y="122">5</text><text x="1683" y="142">4</text><text x="1683" y="162">3</text><text x="1683" y="182">2</text><text x="1683" y="251">2</text><text x="1683" y="271">3</text><text x="1683" y="291">4</text><text x="1683" y="311">5</text>
</g>
<g class="n" fill="#00e800">
<text x="1748" y="122">3711</text><text x="1748" y="142">3710</text><text x="1748" y="162">3709</text><text x="1748" y="182">3708</text><text x="1748" y="251">3704</text><text x="1748" y="271">3703</text><text x="1748" y="291">3702</text><text x="1748" y="311">3701</text>
</g>
<g class="b" fill="#00e800"><text x="1743" y="206">3707</text><text x="1743" y="232">3706</text></g>
<g class="n" text-anchor="end">
<g fill="#00e800"><text x="1860" y="122">74</text><text x="1860" y="142">234</text><text x="1860" y="162">283</text><text x="1860" y="182">160</text></g>
<g fill="#f00000"><text x="1860" y="251">103</text><text x="1860" y="271">90</text><text x="1860" y="291">34</text><text x="1860" y="311">739</text>
<text x="1779" y="100">2.87%</text><text x="1911" y="100">54</text></g>
</g>
<text x="1860" y="206" class="b" fill="#00e800" text-anchor="end">162</text>
<text x="1860" y="232" class="b" fill="#f00000" text-anchor="end">1</text>
<g class="n" text-anchor="end">
<g fill="#00e800"><text x="1778" y="334">3706</text><text x="1778" y="354">-42</text><text x="1779" y="374">-1.12%</text>
<text x="1911" y="334">3708</text><text x="1911" y="374">3719</text><text x="1911" y="394">3730</text><text x="1911" y="414">3690</text><text x="1911" y="474">3560</text><text x="1911" y="517">217217</text></g>
<g fill="#c0c0c0"><text x="1779" y="394">1.07%</text><text x="1911" y="354">3748</text><text x="1911" y="434">1.02</text></g>
<g fill="#c8c800"><text x="1778" y="414">433048</text><text x="1778" y="454">989599</text><text x="1778" y="494">23060</text><text x="1911" y="454">+10780</text><text x="1911" y="494">19</text></g>
<g fill="#f00000"><text x="1778" y="474">3935</text><text x="1777" y="517">215831</text></g>
<text x="1762" y="434" fill="#20d8f0">161</text>
</g>
<text x="1763" y="434" class="s" font-size="15" fill="#20d8f0">亿</text>
<!-- ticks -->
<g class="n" fill="#fff" text-anchor="end">
<text x="1700" y="537">18:59</text><text x="1738" y="537">14:59</text>
<text x="1700" y="556">:49</text><text x="1700" y="575">:49</text><text x="1700" y="594">:50</text><text x="1700" y="613">:50</text><text x="1700" y="632">:51</text><text x="1700" y="651">:51</text><text x="1700" y="670">:52</text><text x="1700" y="689">:52</text><text x="1700" y="708">:53</text><text x="1700" y="727">:53</text><text x="1700" y="746">:54</text><text x="1700" y="765">:55</text><text x="1700" y="784">:55</text><text x="1700" y="803">:56</text><text x="1700" y="822">:56</text><text x="1700" y="841">:57</text><text x="1700" y="860">:57</text><text x="1700" y="879">:58</text><text x="1700" y="898">:58</text><text x="1700" y="917">:59</text><text x="1700" y="936">:59</text><text x="1700" y="955">19:00</text>
</g>
<g class="n" fill="#00e800">
<text x="1747" y="537">3705</text><text x="1747" y="556">3706</text><text x="1747" y="575">3706</text><text x="1747" y="594">3706</text><text x="1747" y="613">3706</text><text x="1747" y="632">3706</text><text x="1747" y="651">3705</text><text x="1747" y="670">3706</text><text x="1747" y="689">3706</text><text x="1747" y="708">3706</text><text x="1747" y="727">3705</text><text x="1747" y="746">3705</text><text x="1747" y="765">3706</text><text x="1747" y="784">3706</text><text x="1747" y="803">3705</text><text x="1747" y="822">3705</text><text x="1747" y="841">3706</text><text x="1747" y="860">3705</text><text x="1747" y="879">3705</text><text x="1747" y="898">3705</text><text x="1747" y="917">3705</text><text x="1747" y="936">3705</text><text x="1747" y="955">3706</text>
</g>
<g class="n" text-anchor="end">
<text x="1846" y="537" fill="#00e800">46</text><text x="1846" y="556" fill="#f00000">15</text><text x="1846" y="575" fill="#f00000">22</text><text x="1846" y="594" fill="#f00000">5</text><text x="1846" y="613" fill="#f00000">16</text><text x="1846" y="632" fill="#f00000">4</text><text x="1846" y="651" fill="#00e800">76</text><text x="1846" y="670" fill="#f00000">17</text><text x="1846" y="689" fill="#f00000">90</text><text x="1846" y="708" fill="#f00000">6</text><text x="1846" y="727" fill="#00e800">36</text><text x="1846" y="746" fill="#00e800">2</text><text x="1846" y="765" fill="#00e800">4</text><text x="1846" y="784" fill="#00e800">69</text><text x="1846" y="803" fill="#00e800">89</text><text x="1846" y="822" fill="#00e800">22</text><text x="1846" y="841" fill="#f00000">6</text><text x="1846" y="860" fill="#00e800">11</text><text x="1846" y="879" fill="#00e800">55</text><text x="1846" y="898" fill="#00e800">13</text><text x="1846" y="917" fill="#00e800">35</text><text x="1846" y="936" fill="#00e800">21</text><text x="1846" y="955" fill="#00e800">70</text>
<text x="1896" y="537" fill="#f00000">32</text><text x="1896" y="556" fill="#00e800">-3</text><text x="1896" y="575" fill="#00e800">-7</text><text x="1896" y="594" fill="#c0c0c0">0</text><text x="1896" y="613" fill="#00e800">-10</text><text x="1896" y="632" fill="#c0c0c0">0</text><text x="1896" y="651" fill="#f00000">5</text><text x="1896" y="670" fill="#00e800">-14</text><text x="1896" y="689" fill="#00e800">-78</text><text x="1896" y="708" fill="#f00000">2</text><text x="1896" y="727" fill="#f00000">19</text><text x="1896" y="746" fill="#f00000">2</text><text x="1896" y="765" fill="#00e800">-3</text><text x="1896" y="784" fill="#00e800">-12</text><text x="1896" y="803" fill="#f00000">12</text><text x="1896" y="822" fill="#00e800">-22</text><text x="1896" y="841" fill="#00e800">-4</text><text x="1896" y="860" fill="#00e800">-11</text><text x="1896" y="879" fill="#00e800">-34</text><text x="1896" y="898" fill="#00e800">-6</text><text x="1896" y="917" fill="#00e800">-27</text><text x="1896" y="936" fill="#00e800">-21</text><text x="1896" y="955" fill="#00e800">-22</text>
</g>
<path fill="none" stroke="#f00000" stroke-width="1.300" d="M1790.500 558V545M1787 549L1790.500 544L1794 549M1790.500 672V659M1787 663L1790.500 658L1794 663M1790.500 843V830M1787 834L1790.500 829L1794 834"/>
<path fill="none" stroke="#00e800" stroke-width="1.300" d="M1790.500 640V653M1787 649L1790.500 654L1794 649M1790.500 716V729M1787 725L1790.500 730L1794 725M1790.500 849V862M1787 858L1790.500 863L1794 858"/>
<path d="M1665 942.500H1896" stroke="#808080" stroke-dasharray="1 3"/>
<path d="M1897.500 523V970" stroke="#505050"/><path d="M1913.500 523V970" stroke="#505050"/>
<rect x="1898" y="524" width="15" height="15" fill="#202020" stroke="#505050"/><path d="M1900 536h10l-5-7z" fill="#606060"/>
<rect x="1898.500" y="925.500" width="14" height="30" rx="4" fill="#101010" stroke="#505050"/><path d="M1901 935h9M1901 939h9M1901 943h9" stroke="#505050"/>
<rect x="1898" y="956" width="15" height="14" fill="#202020" stroke="#505050"/><path d="M1900 959h10l-5 7z" fill="#606060"/>
<rect x="1667.500" y="972.500" width="14" height="13" fill="#202020" stroke="#505050"/><rect x="1682.500" y="972.500" width="14" height="13" fill="#202020" stroke="#505050"/>
<path d="M1678 974v9l-6-4.500zM1685 974v9l6-4.500z" fill="#606060"/>
<path fill="none" stroke="#606060" d="M1699 985L1704 973M1725 973L1730 985H1699M1730 985L1725 973H1750L1756 985M1750 973L1756 985H1782L1776 973H1802L1808 985M1802 973L1808 985H1834L1828 973H1854L1860 985M1854 973L1860 985H1886L1880 973H1906L1901 985H1860"/>
<g class="s" font-size="13" fill="#f4f4f4" text-anchor="middle">
<text x="1711" y="985">细</text><text x="1736" y="985">势</text><text x="1762" y="985">盘</text><text x="1789" y="985">价</text><text x="1815" y="985">逆</text><text x="1841" y="985">成</text><text x="1867" y="985">龙</text><text x="1892" y="985">财</text>
</g>
<!-- status bar -->
<rect y="989" width="1917" height="22" fill="#fff"/>
<g class="st">
<text x="5" y="1008" fill="#202020">沪</text><text x="24" y="1008" fill="#008000" textLength="41" lengthAdjust="spacingAndGlyphs">2939.3</text><text x="71" y="1008" fill="#008000" textLength="45" lengthAdjust="spacingAndGlyphs">-1.47%</text><text x="121" y="1008" fill="#008000" textLength="49" lengthAdjust="spacingAndGlyphs">(-43.77)</text><text x="176" y="1008" fill="#000" textLength="43" lengthAdjust="spacingAndGlyphs">3040亿</text>
<text x="536" y="1008" fill="#202020">深</text><text x="553" y="1008" fill="#008000" textLength="42" lengthAdjust="spacingAndGlyphs">9426.0</text><text x="602" y="1008" fill="#008000" textLength="43" lengthAdjust="spacingAndGlyphs">-1.51%</text><text x="651" y="1008" fill="#008000" textLength="57" lengthAdjust="spacingAndGlyphs">(-144.39)</text><text x="713" y="1008" fill="#000" textLength="46" lengthAdjust="spacingAndGlyphs">4171亿</text>
<text x="1066" y="1008" fill="#000" textLength="22" lengthAdjust="spacingAndGlyphs">300</text><text x="1094" y="1008" fill="#008000" textLength="43" lengthAdjust="spacingAndGlyphs">3474.2</text><text x="1143" y="1008" fill="#008000" textLength="44" lengthAdjust="spacingAndGlyphs">-1.04%</text><text x="1192" y="1008" fill="#008000" textLength="49" lengthAdjust="spacingAndGlyphs">(-36.35)</text><text x="1247" y="1008" fill="#000" textLength="44" lengthAdjust="spacingAndGlyphs">1521亿</text>
</g>
<g stroke="#000" stroke-width="1">
<rect x="225.500" y="994.500" width="148" height="10" fill="#108000"/><rect x="225.500" y="994.500" width="74" height="10" fill="#f00000"/>
<rect x="763.500" y="994.500" width="149" height="10" fill="#108000"/><rect x="763.500" y="994.500" width="74" height="10" fill="#f00000"/>
<rect x="1297.500" y="994.500" width="148" height="10" fill="#108000"/><rect x="1297.500" y="994.500" width="73" height="10" fill="#f00000"/>
</g>
<path fill="#108000" d="M225 1007h10v4h-10zM763 1007h10v4h-10zM1297 1007h10v4h-10z"/>
<path d="M1589.500 990V1011" stroke="#c8c8c8"/>
<g fill="#f4f4f4" stroke="#d0d0d0"><rect x="1679.500" y="991.500" width="26" height="22"/><rect x="1710" y="991.500" width="26" height="22"/><rect x="1740" y="991.500" width="26" height="22"/><rect x="1770" y="991.500" width="26" height="22"/><rect x="1800" y="991.500" width="26" height="22"/><rect x="1830" y="991.500" width="26" height="22"/><rect x="1860" y="991.500" width="57" height="22" fill="#f0f0f0"/></g>
<path d="M1693 996C1689 996 1688 998 1688 1000H1693V1001H1687C1685 1001 1687 1008 1689 1008V1005C1689 1003 1691 1003 1693 1003C1695 1003 1697 1002 1697 1000V998C1697 997 1695 996 1693 996ZM1693 1010C1697 1010 1698 1008 1698 1006H1693V1005H1699C1701 1005 1699 998 1697 998V1001C1697 1003 1695 1003 1693 1003C1691 1003 1689 1004 1689 1006V1008C1689 1009 1691 1010 1693 1010Z" fill="#111"/>
<path d="M1718 997C1718 994 1728 994 1728 997V1009C1728 1011 1718 1011 1718 1009Z" fill="#a01010" stroke="#301010"/>
<circle cx="1753" cy="1001" r="6.500" fill="#4090c8" stroke="#203860"/><path d="M1749 1005L1757 997M1749 997L1757 1005" stroke="#e0e0e0"/>
<path d="M1783 995C1780 995 1780 999 1779 1002L1777 1006H1789L1787 1002C1786 999 1786 995 1783 995ZM1781 1007H1785L1783 1009Z" fill="#c8c8c8" stroke="#505050"/>
<path d="M1806 1001L1814 996L1822 1001L1814 1007Z" fill="#e8d040" stroke="#605010"/>
<path d="M1837 997L1846 994V1007L1837 1009Z" fill="#a0a0a0" stroke="#404040"/>
<path d="M1838 1000h5M1838 1004h5" stroke="#404040"/>
<text x="1862" y="1008" font-family="Liberation Sans" font-size="14" fill="#202020" textLength="52" lengthAdjust="spacingAndGlyphs">16:34:41</text>
</svg>
</body></html>
